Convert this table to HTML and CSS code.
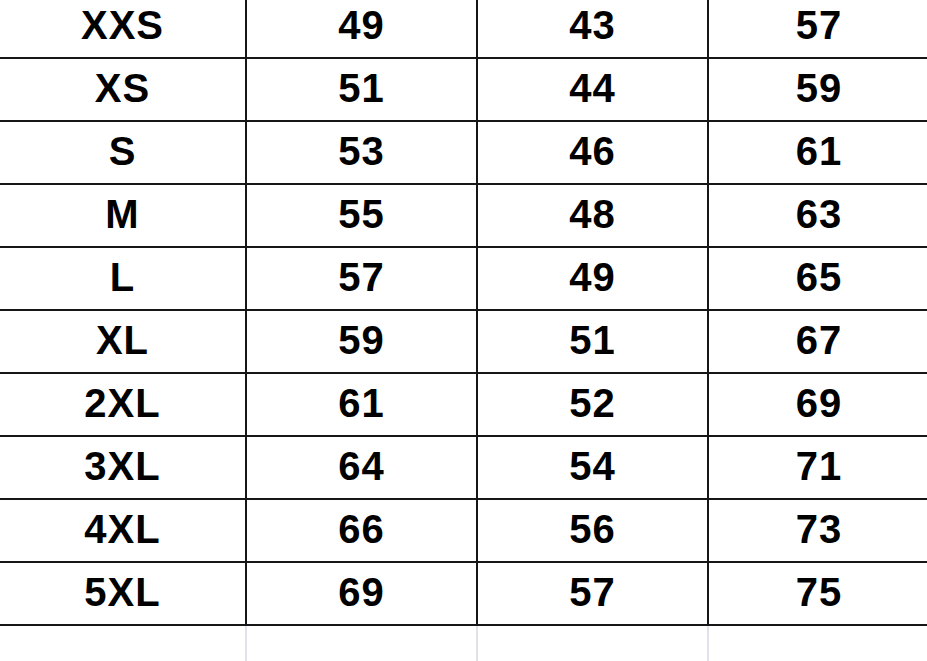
FILE: index.html
```html
<!DOCTYPE html>
<html lang="en">
<head>
<meta charset="utf-8">
<title>Size chart</title>
<link rel="stylesheet" href="styles.css">
</head>
<body>
<table class="size-table">
  <colgroup>
    <col class="col-size">
    <col class="col-a">
    <col class="col-b">
    <col class="col-c">
  </colgroup>
  <tbody>
    <tr><td>XXS</td><td>49</td><td>43</td><td>57</td></tr>
    <tr><td>XS</td><td>51</td><td>44</td><td>59</td></tr>
    <tr><td>S</td><td>53</td><td>46</td><td>61</td></tr>
    <tr><td>M</td><td>55</td><td>48</td><td>63</td></tr>
    <tr><td>L</td><td>57</td><td>49</td><td>65</td></tr>
    <tr><td>XL</td><td>59</td><td>51</td><td>67</td></tr>
    <tr><td>2XL</td><td>61</td><td>52</td><td>69</td></tr>
    <tr><td>3XL</td><td>64</td><td>54</td><td>71</td></tr>
    <tr><td>4XL</td><td>66</td><td>56</td><td>73</td></tr>
    <tr><td>5XL</td><td>69</td><td>57</td><td>75</td></tr>
    <tr class="filler"><td></td><td></td><td></td><td></td></tr>
  </tbody>
</table>
</body>
</html>
```

FILE: styles.css
```css
html, body {
  margin: 0;
  padding: 0;
  background: #ffffff;
  overflow: hidden;
}

.size-table {
  margin-top: -6px;
  width: 929px;
  table-layout: fixed;
  border-collapse: collapse;
  font-family: "Liberation Sans", Arial, sans-serif;
  font-weight: bold;
  font-size: 40px;
  letter-spacing: 1px;
  color: #000000;
}

.col-size { width: 246px; }
.col-a { width: 231px; }
.col-b { width: 231px; }
.col-c { width: 221px; }

.size-table td {
  height: 59px;
  padding: 0 0 2px 0;
  text-align: center;
  vertical-align: middle;
  border-top: 2px solid #161616;
  border-bottom: 2px solid #161616;
  border-left: 2px solid #161616;
}

.size-table td:first-child {
  border-left: none;
}

.size-table .filler td {
  height: 60px;
  border-top: none;
  border-bottom: none;
  border-left: 2px solid #dfe2ec;
}

.size-table .filler td:first-child {
  border-left: none;
}
```
